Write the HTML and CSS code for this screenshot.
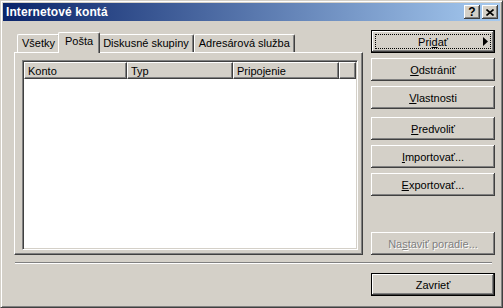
FILE: index.html
```html
<!DOCTYPE html>
<html lang="sk">
<head>
    <meta charset="UTF-8">
    <title>Internetové kontá</title>
    <link rel="stylesheet" href="styles.css">
</head>
<body>
    <div class="window">
        <div class="titlebar">
            <span class="title">Internetové kontá</span>
            <div class="caption-buttons">
                <span class="cap-btn help">?</span>
                <span class="cap-btn close">
                    <svg width="8" height="7" viewBox="0 0 8 7">
                        <path d="M0.5 0.5 L7.5 6.5 M7.5 0.5 L0.5 6.5" stroke="#000" stroke-width="1.6"/>
                    </svg>
                </span>
            </div>
        </div>

        <div class="main">
            <div class="left">
                <div class="tabs">
                    <span class="tab">Všetky</span>
                    <span class="tab active">Pošta</span>
                    <span class="tab">Diskusné skupiny</span>
                    <span class="tab">Adresárová služba</span>
                </div>
                <div class="panel">
                    <div class="listview">
                        <div class="header">
                            <span class="col c1">Konto</span>
                            <span class="col c2">Typ</span>
                            <span class="col c3">Pripojenie</span>
                            <span class="col c4"></span>
                        </div>
                    </div>
                </div>
            </div>

            <div class="right">
                <button class="btn default focused">Pri<u>d</u>ať
                    <svg class="arrow" width="5" height="9" viewBox="0 0 5 9"><polygon points="0,0 5,4.5 0,9" fill="#000"/></svg>
                </button>
                <button class="btn gap-small"><u>O</u>dstrániť</button>
                <button class="btn gap-small"><u>V</u>lastnosti</button>
                <button class="btn gap-big"><u>P</u>redvoliť</button>
                <button class="btn gap-small"><u>I</u>mportovať...</button>
                <button class="btn gap-small"><u>E</u>xportovať...</button>
                <button class="btn disabled">Na<u>s</u>taviť poradie...</button>
            </div>
        </div>

        <div class="separator"></div>

        <div class="footer">
            <button class="btn default">Zavrieť</button>
        </div>
    </div>
</body>
</html>
```

FILE: styles.css
```css
* {
    margin: 0;
    padding: 0;
    box-sizing: border-box;
}

body {
    font-family: "Liberation Sans", Arial, sans-serif;
    font-size: 11px;
    color: #000;
    background-color: #d4d0c8;
}

.window {
    width: 503px;
    height: 308px;
    padding: 2px;
    background-color: #d4d0c8;
    border: 1px solid;
    border-color: #d4d0c8 #404040 #404040 #d4d0c8;
    box-shadow: inset 1px 1px #fff, inset -1px -1px #808080;
}

.titlebar {
    height: 18px;
    display: flex;
    align-items: center;
    justify-content: space-between;
    padding: 0 2px 0 3px;
    background: linear-gradient(to right, #0a246a, #a6caf0);
}

.title {
    color: #fff;
    font-weight: bold;
    font-size: 12px;
    letter-spacing: 0.1px;
}

.caption-buttons {
    display: flex;
    gap: 2px;
}

.cap-btn {
    width: 16px;
    height: 14px;
    display: flex;
    align-items: center;
    justify-content: center;
    background-color: #d4d0c8;
    box-shadow: inset -1px -1px #404040, inset 1px 1px #fff, inset -2px -2px #808080;
}

.help {
    font-weight: bold;
    font-size: 12px;
    line-height: 14px;
    padding-bottom: 1px;
}

.main {
    display: flex;
    gap: 8px;
    padding: 9px 5px 0 11px;
}

.left {
    width: 349px;
    margin-top: 2px;
}

.tabs {
    display: flex;
    height: 20px;
    padding-left: 3px;
    align-items: flex-end;
}

.tab {
    height: 18px;
    padding: 2px 4px 0 4px;
    border-top: 1px solid #fff;
    border-left: 1px solid #fff;
    border-right: 1px solid #404040;
    border-radius: 2px 2px 0 0;
    box-shadow: inset -1px 0 #808080;
    white-space: nowrap;
}

.tab.active {
    position: relative;
    z-index: 1;
    height: 21px;
    margin: 0 -2px -1px -2px;
    padding: 2px 6px 0 6px;
    background-color: #d4d0c8;
}

.panel {
    height: 203px;
    padding: 7px 4px 4px 7px;
    border: 1px solid;
    border-color: #fff #404040 #404040 #fff;
    box-shadow: inset -1px -1px #808080;
}

.listview {
    height: 100%;
    background-color: #fff;
    border: 1px solid;
    border-color: #808080 #fff #fff #808080;
    box-shadow: inset 1px 1px #404040, inset -1px -1px #d4d0c8;
    padding: 1px;
}

.header {
    display: flex;
    height: 17px;
}

.col {
    height: 17px;
    padding: 2px 0 0 3px;
    background-color: #d4d0c8;
    border-top: 1px solid #fff;
    border-left: 1px solid #fff;
    border-right: 1px solid #404040;
    border-bottom: 1px solid #404040;
    box-shadow: inset -1px -1px #808080;
    white-space: nowrap;
}

.c1 { width: 103px; }
.c2 { width: 106px; }
.c3 { width: 106px; }
.c4 { flex: 1; }

.right {
    width: 124px;
    display: flex;
    flex-direction: column;
}

.btn {
    position: relative;
    height: 23px;
    width: 124px;
    font-family: "Liberation Sans", Arial, sans-serif;
    font-size: 11px;
    color: #000;
    background-color: #d4d0c8;
    border: none;
    box-shadow: inset -1px -1px #404040, inset 1px 1px #fff, inset -2px -2px #808080;
}

.btn.default {
    border: 1px solid #000;
}

.btn.focused {
    outline: 1px dotted #000;
    outline-offset: -5px;
}

.arrow {
    position: absolute;
    right: 6px;
    top: 6px;
}

.gap-small {
    margin-top: 5px;
}

.gap-big {
    margin-top: 8px;
}

.btn.disabled {
    margin-top: auto;
    color: #808080;
    text-shadow: 1px 1px #fff;
}

.separator {
    height: 2px;
    margin: 7px 8px 0 12px;
    border-top: 1px solid #808080;
    border-bottom: 1px solid #fff;
}

.footer {
    display: flex;
    justify-content: flex-end;
    padding: 9px 5px 0 0;
}
```
